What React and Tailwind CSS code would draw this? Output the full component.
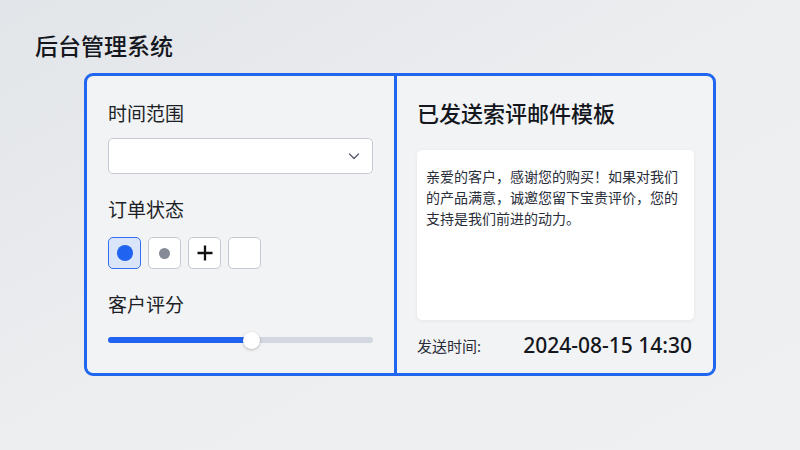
import React from 'react'

const font = { fontFamily: '"Noto Sans", "Noto Sans CJK SC", sans-serif' }

// Status toggle button
function StatusButton({ active, children }) {
  return (
    <div
      className={
        active
          ? 'w-[33px] h-[32px] rounded-[5px] border border-[#2f6ff0] bg-[#dbe5fa] flex items-center justify-center'
          : 'w-[33px] h-[32px] rounded-[5px] border border-[#c5c8d2] bg-white flex items-center justify-center'
      }
    >
      {children}
    </div>
  )
}

function LeftPanel() {
  return (
    <div className="w-[307px] shrink-0 pt-[25px] px-[21px]">
      <div className="text-[19px] leading-[26px] text-[#1c1f26]">时间范围</div>
      <div className="mt-[11px] h-[36px] rounded-[5px] border border-[#c6c9d3] bg-white flex items-center justify-end pr-[10px]">
        <svg width="16" height="16" viewBox="0 0 16 16" fill="none">
          <path d="M3.5 6 L8 10.5 L12.5 6" stroke="#5c6170" strokeWidth="1.4" strokeLinecap="round" strokeLinejoin="round" />
        </svg>
      </div>

      <div className="mt-[23px] text-[19px] leading-[26px] text-[#1c1f26]">订单状态</div>
      <div className="mt-[14px] flex gap-[7px]">
        <StatusButton active>
          <div className="w-[16px] h-[16px] rounded-full bg-[#1f63f0]" />
        </StatusButton>
        <StatusButton>
          <div className="w-[11px] h-[11px] rounded-full bg-[#868b98]" />
        </StatusButton>
        <StatusButton>
          <svg width="20" height="20" viewBox="0 0 20 20">
            <path d="M10 2.5 V17.5 M2.5 10 H17.5" stroke="#111" strokeWidth="2.3" />
          </svg>
        </StatusButton>
        <StatusButton />
      </div>

      <div className="mt-[23px] text-[19px] leading-[26px] text-[#1c1f26]">客户评分</div>
      <div className="mt-[14px] relative h-[16px] flex items-center">
        <div className="w-full h-[6px] rounded-full bg-[#d3d7df] flex">
          <div className="w-[143px] h-full rounded-full bg-[#1f63f0]" />
        </div>
        <div className="absolute left-[135px] top-0 w-[17px] h-[17px] rounded-full bg-white shadow-[0_1px_3px_rgba(0,0,0,0.25)]" />
      </div>
    </div>
  )
}

function RightPanel() {
  return (
    <div className="flex-1 border-l-[3px] border-[#2166ee] pt-[23px] pl-[20px] pr-[19px]">
      <div className="text-[22px] leading-[28px] font-medium text-[#14171d]">已发送索评邮件模板</div>
      <div className="mt-[23px] h-[170px] rounded-[5px] bg-white shadow-[0_1px_4px_rgba(0,0,0,0.06)] pt-[16px] pl-[9px] pr-[8px]">
        <p className="text-[14px] leading-[21px] text-[#2a2e3a]">
          亲爱的客户，感谢您的购买！如果对我们的产品满意，诚邀您留下宝贵评价，您的支持是我们前进的动力。
        </p>
      </div>
      <div className="mt-[14px] h-[24px] flex items-center justify-between pr-[2px]">
        <span className="text-[15px] text-[#2a2e3a]">发送时间:</span>
        <span className="text-[21px] font-medium text-[#14171d]">2024-08-15 14:30</span>
      </div>
    </div>
  )
}

export default function App() {
  return (
    <div
      className="w-[800px] h-[450px] overflow-hidden bg-gradient-to-br from-[#e2e5e9] via-[#eceef0] to-[#eef0f2] pt-[30px] pl-[35px]"
      style={font}
    >
      <h1 className="text-[23px] leading-[32px] font-medium text-[#14171d]">后台管理系统</h1>
      <div className="mt-[11px] ml-[49px] w-[632px] h-[303px] rounded-[9px] border-[3px] border-[#2166ee] bg-[#f2f3f5] flex overflow-hidden">
        <LeftPanel />
        <RightPanel />
      </div>
    </div>
  )
}
